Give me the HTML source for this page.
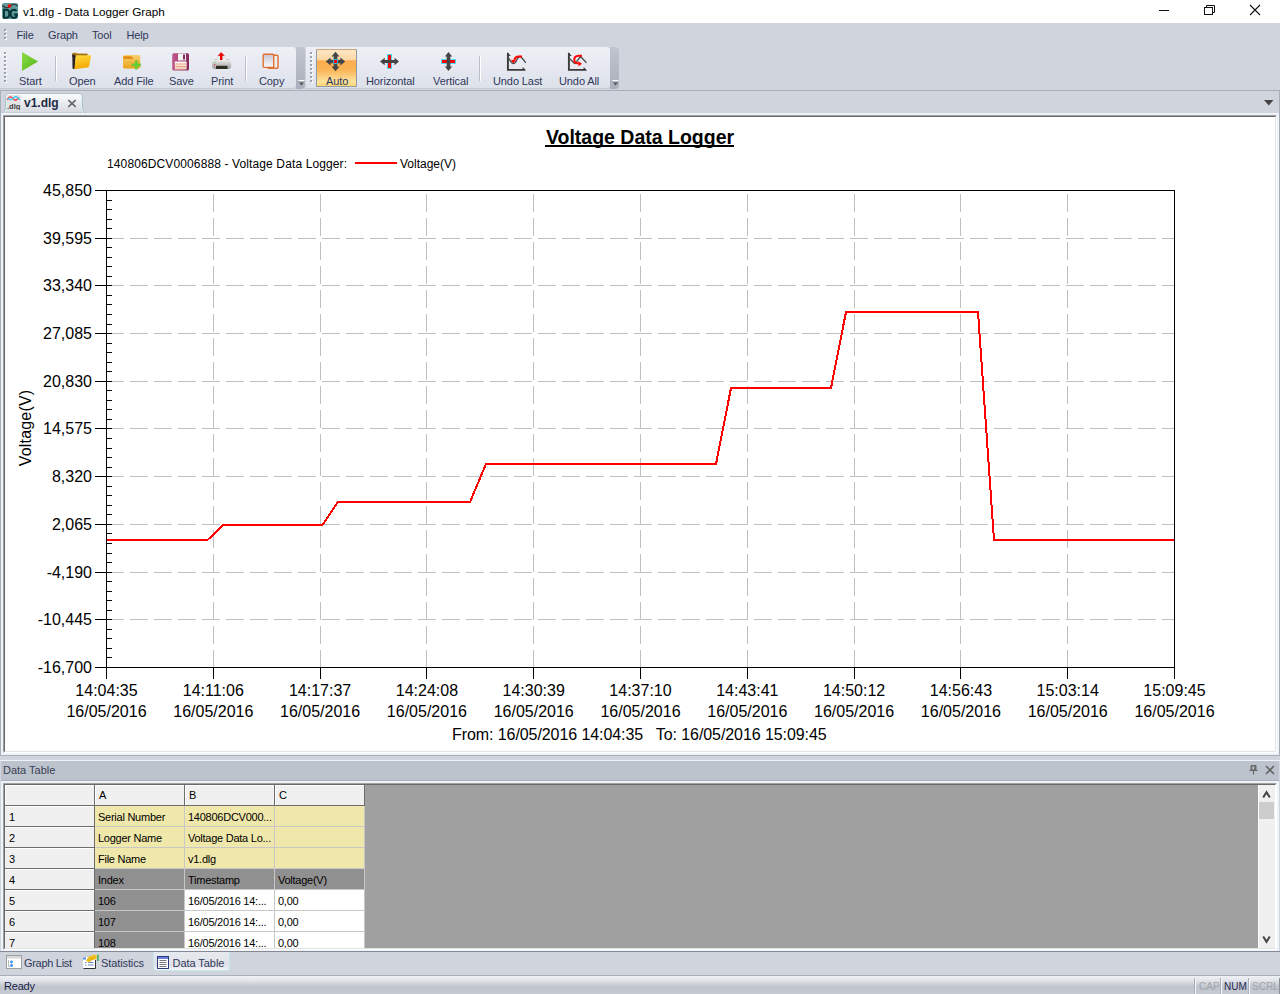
<!DOCTYPE html>
<html><head><meta charset="utf-8"><style>
*{margin:0;padding:0;box-sizing:border-box}
html,body{width:1280px;height:994px;overflow:hidden;background:#cfd4dd;font-family:"Liberation Sans",sans-serif;position:relative}
.a{position:absolute}
.t{position:absolute;white-space:nowrap;line-height:1}
</style></head><body>
<div class="a" style="left:0px;top:0px;width:1280px;height:23px;background:#fff"></div>
<svg class="a" style="left:2px;top:3px" width="17" height="17" viewBox="0 0 17 17">
<rect x="0" y="0" width="16" height="16" rx="2" fill="#5e9c9c"/>
<path d="M0.3 2.5 Q3 5 5.5 4.7 Q8 4 10.5 1.5 Q12.5 0.5 16 3" stroke="#333" stroke-width="1.1" fill="none"/>
<circle cx="7.4" cy="3" r="1.8" fill="#f00"/>
<g transform="translate(0,-0.8)"><path d="M2 7.6 H4.3 Q7.3 7.6 7.3 11.6 Q7.3 15.6 4.3 15.6 H2 Z" stroke="#073535" stroke-width="2" fill="none"/>
<path d="M14.6 8.6 Q13.6 7.5 11.8 7.5 Q8.6 7.5 8.6 11.6 Q8.6 15.7 11.8 15.7 Q14.8 15.7 14.8 12.4 H11.8" stroke="#073535" stroke-width="2" fill="none"/></g>
</svg>
<div class="t" style="left:23px;top:5.5px;font-size:11.7px;color:#000;font-weight:400;">v1.dlg - Data Logger Graph</div>
<div class="a" style="left:1159px;top:10px;width:10px;height:1px;background:#111"></div>
<svg class="a" style="left:1200px;top:0px" width="20" height="20" viewBox="0 0 20 20">
<rect x="4.5" y="7.5" width="8" height="7" fill="none" stroke="#111" stroke-width="1"/>
<path d="M6.5 7.5 V5.5 H14.5 V12.5 H12.5" fill="none" stroke="#111" stroke-width="1"/>
</svg>
<svg class="a" style="left:1245px;top:0px" width="20" height="20" viewBox="0 0 20 20">
<path d="M5 5 L15 15 M15 5 L5 15" stroke="#111" stroke-width="1.1"/>
</svg>
<div class="a" style="left:0px;top:23px;width:1280px;height:67px;background:#cfd4dd"></div>
<div class="a" style="left:4px;top:29px;width:2px;height:2px;background:#9aa1ad;box-shadow:1px 1px 0 #fff"></div>
<div class="a" style="left:4px;top:33px;width:2px;height:2px;background:#9aa1ad;box-shadow:1px 1px 0 #fff"></div>
<div class="a" style="left:4px;top:37px;width:2px;height:2px;background:#9aa1ad;box-shadow:1px 1px 0 #fff"></div>
<div class="t" style="left:16.5px;top:30px;font-size:11px;color:#30385a;font-weight:400;letter-spacing:-0.15px">File</div>
<div class="t" style="left:48px;top:30px;font-size:11px;color:#30385a;font-weight:400;letter-spacing:-0.15px">Graph</div>
<div class="t" style="left:92px;top:30px;font-size:11px;color:#30385a;font-weight:400;letter-spacing:-0.15px">Tool</div>
<div class="t" style="left:126.5px;top:30px;font-size:11px;color:#30385a;font-weight:400;letter-spacing:-0.15px">Help</div>
<div class="a" style="left:0px;top:47px;width:296px;height:42px;background:linear-gradient(#eef0f6,#dde1ea);border-radius:0 4px 4px 0;border-bottom:1px solid #c5cad3"></div>
<div class="a" style="left:4px;top:52px;width:2px;height:2px;background:#9aa1ad;box-shadow:1px 1px 0 #fff"></div>
<div class="a" style="left:4px;top:56px;width:2px;height:2px;background:#9aa1ad;box-shadow:1px 1px 0 #fff"></div>
<div class="a" style="left:4px;top:60px;width:2px;height:2px;background:#9aa1ad;box-shadow:1px 1px 0 #fff"></div>
<div class="a" style="left:4px;top:64px;width:2px;height:2px;background:#9aa1ad;box-shadow:1px 1px 0 #fff"></div>
<div class="a" style="left:4px;top:68px;width:2px;height:2px;background:#9aa1ad;box-shadow:1px 1px 0 #fff"></div>
<div class="a" style="left:4px;top:72px;width:2px;height:2px;background:#9aa1ad;box-shadow:1px 1px 0 #fff"></div>
<div class="a" style="left:4px;top:76px;width:2px;height:2px;background:#9aa1ad;box-shadow:1px 1px 0 #fff"></div>
<div class="a" style="left:4px;top:80px;width:2px;height:2px;background:#9aa1ad;box-shadow:1px 1px 0 #fff"></div>
<div class="a" style="left:296px;top:47px;width:9px;height:42px;background:linear-gradient(#bfc4ce,#aab0bb);border-radius:0 4px 4px 0"></div>
<svg class="a" style="left:298px;top:79px" width="7" height="8" viewBox="0 0 7 8"><path d="M0.5 1.5H6.5" stroke="#fff"/><path d="M1 3.5L3.5 6.5L6 3.5Z" fill="#555"/></svg>
<div class="a" style="left:306px;top:47px;width:304px;height:42px;background:linear-gradient(#eef0f6,#dde1ea);border-radius:0 4px 4px 0;border-bottom:1px solid #c5cad3"></div>
<div class="a" style="left:310px;top:52px;width:2px;height:2px;background:#9aa1ad;box-shadow:1px 1px 0 #fff"></div>
<div class="a" style="left:310px;top:56px;width:2px;height:2px;background:#9aa1ad;box-shadow:1px 1px 0 #fff"></div>
<div class="a" style="left:310px;top:60px;width:2px;height:2px;background:#9aa1ad;box-shadow:1px 1px 0 #fff"></div>
<div class="a" style="left:310px;top:64px;width:2px;height:2px;background:#9aa1ad;box-shadow:1px 1px 0 #fff"></div>
<div class="a" style="left:310px;top:68px;width:2px;height:2px;background:#9aa1ad;box-shadow:1px 1px 0 #fff"></div>
<div class="a" style="left:310px;top:72px;width:2px;height:2px;background:#9aa1ad;box-shadow:1px 1px 0 #fff"></div>
<div class="a" style="left:310px;top:76px;width:2px;height:2px;background:#9aa1ad;box-shadow:1px 1px 0 #fff"></div>
<div class="a" style="left:310px;top:80px;width:2px;height:2px;background:#9aa1ad;box-shadow:1px 1px 0 #fff"></div>
<div class="a" style="left:610px;top:47px;width:9px;height:42px;background:linear-gradient(#bfc4ce,#aab0bb);border-radius:0 4px 4px 0"></div>
<svg class="a" style="left:612px;top:79px" width="7" height="8" viewBox="0 0 7 8"><path d="M0.5 1.5H6.5" stroke="#fff"/><path d="M1 3.5L3.5 6.5L6 3.5Z" fill="#555"/></svg>
<div class="a" style="left:55px;top:56px;width:1px;height:25px;background:#b9bec8;box-shadow:1px 0 0 #fff"></div>
<div class="a" style="left:245px;top:56px;width:1px;height:25px;background:#b9bec8;box-shadow:1px 0 0 #fff"></div>
<div class="a" style="left:479px;top:56px;width:1px;height:25px;background:#b9bec8;box-shadow:1px 0 0 #fff"></div>
<div class="a" style="left:316px;top:49px;width:41px;height:38px;background:linear-gradient(#fde5c4 0%,#fcd8a6 27%,#fbad4e 30%,#fbb457 55%,#fde39e 88%,#fdd670 100%);border:1px solid #8f9aa6;border-top-color:#c9a47a;border-radius:1px"></div>
<div class="t" style="left:19px;top:76px;font-size:11px;color:#30385a;font-weight:400;letter-spacing:-0.1px">Start</div>
<div class="t" style="left:69px;top:76px;font-size:11px;color:#30385a;font-weight:400;letter-spacing:-0.1px">Open</div>
<div class="t" style="left:114px;top:76px;font-size:11px;color:#30385a;font-weight:400;letter-spacing:-0.1px">Add File</div>
<div class="t" style="left:169px;top:76px;font-size:11px;color:#30385a;font-weight:400;letter-spacing:-0.1px">Save</div>
<div class="t" style="left:211px;top:76px;font-size:11px;color:#30385a;font-weight:400;letter-spacing:-0.1px">Print</div>
<div class="t" style="left:259px;top:76px;font-size:11px;color:#30385a;font-weight:400;letter-spacing:-0.1px">Copy</div>
<div class="t" style="left:326px;top:76px;font-size:11px;color:#30385a;font-weight:400;letter-spacing:-0.1px">Auto</div>
<div class="t" style="left:366px;top:76px;font-size:11px;color:#30385a;font-weight:400;letter-spacing:-0.1px">Horizontal</div>
<div class="t" style="left:433px;top:76px;font-size:11px;color:#30385a;font-weight:400;letter-spacing:-0.1px">Vertical</div>
<div class="t" style="left:493px;top:76px;font-size:11px;color:#30385a;font-weight:400;letter-spacing:-0.1px">Undo Last</div>
<div class="t" style="left:559px;top:76px;font-size:11px;color:#30385a;font-weight:400;letter-spacing:-0.1px">Undo All</div>
<svg class="a" style="left:20px;top:51px" width="20" height="21" viewBox="0 0 20 21">
<defs><linearGradient id="gp" x1="0" y1="0" x2="1" y2="1"><stop offset="0" stop-color="#8fdc4a"/><stop offset="1" stop-color="#4fb511"/></linearGradient></defs>
<path d="M2 1 L18 10.5 L2 20 Z" fill="url(#gp)"/></svg>
<svg class="a" style="left:72px;top:52px" width="20" height="18" viewBox="0 0 20 18">
<defs><linearGradient id="gof" x1="0" y1="0" x2="0.3" y2="1"><stop offset="0" stop-color="#ffdc40"/><stop offset="1" stop-color="#f5aa00"/></linearGradient>
<linearGradient id="gob" x1="0" y1="0" x2="0" y2="1"><stop offset="0" stop-color="#c08a20"/><stop offset="1" stop-color="#6a4a10"/></linearGradient></defs>
<path d="M0.3 1.8 Q0.3 0.8 1.3 0.8 H4.5 L5.5 1.6 H15.5 V5 H0.3 Z" fill="url(#gob)"/>
<path d="M0.3 2 L0.5 16.5 L2.8 17.3 L3.8 4 Z" fill="#2a2520"/>
<path d="M3.8 3.2 H19.2 L16.8 15.3 L2.4 17.2 Z" fill="url(#gof)"/></svg>
<svg class="a" style="left:123px;top:54px" width="19" height="17" viewBox="0 0 19 17">
<defs><linearGradient id="gaf" x1="0" y1="0" x2="0" y2="1"><stop offset="0" stop-color="#f9d070"/><stop offset="1" stop-color="#eaa21a"/></linearGradient></defs>
<path d="M0 2.5 Q0 1 1.5 1 H15.5 Q17.2 1 17.2 2.5 V12.8 Q17.2 14.4 15.5 14.4 H1.5 Q0 14.4 0 12.8 Z" fill="url(#gaf)"/>
<path d="M0.3 2.2 H8.5 L10.5 5 H0.3 Z" fill="#e28e12"/>
<path d="M13.3 6.3 V15.4 M8.7 10.9 H17.9" stroke="#66cc33" stroke-width="2.6"/></svg>
<svg class="a" style="left:172px;top:52.5px" width="18" height="18" viewBox="0 0 18 18">
<defs><linearGradient id="gsv" x1="0" y1="0" x2="1" y2="0"><stop offset="0" stop-color="#c4588e"/><stop offset="1" stop-color="#85285a"/></linearGradient>
<linearGradient id="gsl" x1="0" y1="0" x2="0" y2="1"><stop offset="0" stop-color="#fff"/><stop offset="1" stop-color="#f3c8b0"/></linearGradient></defs>
<rect x="0.2" y="0.2" width="16.8" height="17.2" rx="1.5" fill="url(#gsv)"/>
<rect x="6" y="0.5" width="8" height="7" fill="#f4f4f4"/>
<rect x="11" y="1.5" width="2" height="5" fill="#8a2a5a"/>
<rect x="2.8" y="8.5" width="11.8" height="8" fill="url(#gsl)"/>
<path d="M3.5 11H14M3.5 13.5H14" stroke="#e8a080" stroke-width="1"/></svg>
<svg class="a" style="left:212px;top:52px" width="20" height="18" viewBox="0 0 20 18">
<defs><linearGradient id="gpr" x1="0" y1="0" x2="0" y2="1"><stop offset="0" stop-color="#f2f2f2"/><stop offset="1" stop-color="#9a9a9a"/></linearGradient></defs>
<path d="M5 3.5 H14 L15 8 H4 Z" fill="#e8e8e8"/>
<path d="M2 8 L3 7 H5 L5.5 8 M14 8 L14.5 7 H16.5 L17.5 8" fill="#333"/>
<rect x="0" y="7.3" width="19.2" height="9.8" rx="3" fill="url(#gpr)"/>
<rect x="4" y="13.8" width="11.5" height="3.2" fill="#2d2d22"/>
<rect x="2" y="10.3" width="1.2" height="1" fill="#5c5"/><rect x="2" y="12" width="1.2" height="1.4" fill="#e33"/>
<path d="M9.2 0.2 L12.8 3.8 H10.4 V8 H8 V3.8 H5.6 Z" fill="#e80000"/></svg>
<svg class="a" style="left:262px;top:53px" width="18" height="17" viewBox="0 0 18 17">
<defs><linearGradient id="gcp" x1="0" y1="0" x2="0" y2="1"><stop offset="0" stop-color="#c6c6d6"/><stop offset="1" stop-color="#fafafa"/></linearGradient></defs>
<rect x="5.5" y="2.3" width="10.5" height="13" rx="1" fill="#eee" stroke="#e07030" stroke-width="1.4"/>
<rect x="1.2" y="1.2" width="10.5" height="13.2" rx="1" fill="url(#gcp)" stroke="#e07030" stroke-width="1.4"/></svg>
<svg class="a" style="left:320px;top:48px" width="140" height="27" viewBox="320 48 140 27">
<path d="M335.5 51.8 L339.5 56.6 H337.3 V59.7 H340.4 V57.5 L345.2 61.5 L340.4 65.5 V63.3 H337.3 V66.4 H339.5 L335.5 71.2 L331.5 66.4 H333.7 V63.3 H330.6 V65.5 L325.8 61.5 L330.6 57.5 V59.7 H333.7 V56.6 H331.5 Z" fill="#454545"/>
<rect x="333.5" y="59.5" width="4" height="4" fill="#f00" stroke="#33b4dc" stroke-width="1"/>
<rect x="387.5" y="54.5" width="4" height="14" fill="#f00" stroke="#4fd8f0" stroke-width="1"/>
<path d="M380 61.5 L384.7 57.8 V59.9 H394.5 V57.8 L399 61.5 L394.5 65.2 V63.1 H384.7 V65.2 Z" fill="#454545"/>
<rect x="441.5" y="59.5" width="14" height="4" fill="#f00" stroke="#4fd8f0" stroke-width="1"/>
<path d="M448.5 52 L452.2 56.6 H450.3 V66.4 H452.2 L448.5 71 L444.8 66.4 H446.7 V56.6 H444.8 Z" fill="#454545"/>
</svg>
<svg class="a" style="left:500px;top:48px" width="92" height="26" viewBox="500 48 92 26">
<g id="ax"><path d="M507.9 53 V69.9 H525" stroke="#3a3a3a" stroke-width="1.9" fill="none"/>
<path d="M507 52 L510.8 56 H508.5 Z" fill="#3a3a3a"/><path d="M526.4 70.8 L522.6 67 V69.5 Z" fill="#3a3a3a"/></g>
<path d="M508.5 57.8 Q511.5 63.8 513.5 63.6 Q515.5 63.3 517 59.5 Q518.5 56.3 520.2 56.6 Q521.5 57 525.8 62.8" stroke="#4a4a4a" stroke-width="1.3" fill="none"/>
<path d="M522 56.4 H518.5 Q515.5 56.5 514.3 59.8" stroke="#f00" stroke-width="2" fill="none"/>
<path d="M510.8 59.8 L516 60.3 L513.2 63.3 Z" fill="#f00"/>
<use href="#ax" x="61"/>
<path d="M569.5 58.5 L574.5 63.5 Q575.5 64 577 61 L580.5 56.5 L586.5 62.8" stroke="#4a4a4a" stroke-width="1.3" fill="none"/>
<path d="M582 55.8 H578.5 Q574.5 56 574.2 59.8 Q574.3 63.3 578.5 63.6" stroke="#f00" stroke-width="2" fill="none"/>
<path d="M578.2 61.2 L582 63.8 L578.6 66.2 Z" fill="#f00"/>
</svg>
<div class="a" style="left:0px;top:90px;width:1280px;height:1px;background:#a9afb9"></div>
<div class="a" style="left:0px;top:90px;width:1px;height:670px;background:#a9afb9"></div>
<div class="a" style="left:1279px;top:90px;width:1px;height:670px;background:#a9afb9"></div>
<svg class="a" style="left:0px;top:90px" width="90" height="24" viewBox="0 90 90 24">
<defs><linearGradient id="gtab" x1="0" y1="0" x2="0" y2="1"><stop offset="0" stop-color="#fbfcfd"/><stop offset="0.5" stop-color="#e9ebef"/><stop offset="0.9" stop-color="#d9dce3"/><stop offset="1" stop-color="#dfe0da"/></linearGradient></defs>
<path d="M2 113 Q5.5 112.5 5.5 108 V96.5 Q5.5 93.5 8.5 93.5 H79 Q82.5 93.5 82.5 96.5 V108 Q82.5 112.5 86 113 Z" fill="url(#gtab)" stroke="#b9bec6" stroke-width="1"/>
<path d="M4 112.5 Q6.5 111.5 6.5 108 V97" stroke="#c8f4f8" stroke-width="1" fill="none"/>
<path d="M84 112.5 Q81.5 111.5 81.5 108 V97" stroke="#c8f4f8" stroke-width="1" fill="none"/>
</svg>
<svg class="a" style="left:7px;top:95px" width="14" height="15" viewBox="0 0 14 15">
<rect x="0" y="0" width="14" height="15" fill="#e4e4e4"/>
<path d="M0.5 5 Q2 1 4 2 Q6 3 7 4.5 Q8.5 6 10.5 4 L12 2.5" stroke="#f33" stroke-width="1.3" fill="none"/>
<path d="M1 3 Q3.5 6 6 3.5 Q8.5 0.5 10.5 2.5 Q12 4 13 5" stroke="#3cf" stroke-width="1.3" fill="none"/>
<text x="0" y="14" font-family="Liberation Sans" font-size="7.5" font-weight="700" fill="#3a3a3a">.dlg</text></svg>
<div class="t" style="left:24px;top:97px;font-size:12px;color:#1e2a44;font-weight:700;">v1.dlg</div>
<svg class="a" style="left:67px;top:99px" width="10" height="9" viewBox="0 0 10 9"><path d="M1.3 1.2 L8.7 7.8 M8.7 1.2 L1.3 7.8" stroke="#666" stroke-width="1.6"/></svg>
<svg class="a" style="left:1264px;top:100px" width="10" height="6" viewBox="0 0 10 6"><path d="M0 0 H9.5 L4.75 5.5Z" fill="#444"/></svg>
<div class="a" style="left:1px;top:113px;width:1278px;height:643px;background:#eef2fa"></div>
<div class="a" style="left:3px;top:115px;width:1274px;height:638px;background:#fff;border-top:1px solid #a0a0a0;border-left:1px solid #a0a0a0;border-right:1px solid #fff;border-bottom:1px solid #fff"></div>
<div class="a" style="left:4px;top:116px;width:1272px;height:636px;background:#fff;border-top:1px solid #696969;border-left:1px solid #696969;border-right:1px solid #e3e3e3;border-bottom:1px solid #e3e3e3"></div>
<div class="a" style="left:0px;top:755px;width:1280px;height:1px;background:#a9afb9"></div>
<svg class="a" style="left:0;top:0" width="1280" height="994" viewBox="0 0 1280 994">
<line x1="106" y1="238.5" x2="1174" y2="238.5" stroke="#c0c0c0" stroke-width="1" stroke-dasharray="18 6"/>
<line x1="106" y1="285.5" x2="1174" y2="285.5" stroke="#c0c0c0" stroke-width="1" stroke-dasharray="18 6"/>
<line x1="106" y1="333.5" x2="1174" y2="333.5" stroke="#c0c0c0" stroke-width="1" stroke-dasharray="18 6"/>
<line x1="106" y1="381.5" x2="1174" y2="381.5" stroke="#c0c0c0" stroke-width="1" stroke-dasharray="18 6"/>
<line x1="106" y1="428.5" x2="1174" y2="428.5" stroke="#c0c0c0" stroke-width="1" stroke-dasharray="18 6"/>
<line x1="106" y1="476.5" x2="1174" y2="476.5" stroke="#c0c0c0" stroke-width="1" stroke-dasharray="18 6"/>
<line x1="106" y1="524.5" x2="1174" y2="524.5" stroke="#c0c0c0" stroke-width="1" stroke-dasharray="18 6"/>
<line x1="106" y1="572.5" x2="1174" y2="572.5" stroke="#c0c0c0" stroke-width="1" stroke-dasharray="18 6"/>
<line x1="106" y1="619.5" x2="1174" y2="619.5" stroke="#c0c0c0" stroke-width="1" stroke-dasharray="18 6"/>
<line x1="213.5" y1="668" x2="213.5" y2="190" stroke="#c0c0c0" stroke-width="1" stroke-dasharray="18 6"/>
<line x1="320.5" y1="668" x2="320.5" y2="190" stroke="#c0c0c0" stroke-width="1" stroke-dasharray="18 6"/>
<line x1="426.5" y1="668" x2="426.5" y2="190" stroke="#c0c0c0" stroke-width="1" stroke-dasharray="18 6"/>
<line x1="533.5" y1="668" x2="533.5" y2="190" stroke="#c0c0c0" stroke-width="1" stroke-dasharray="18 6"/>
<line x1="640.5" y1="668" x2="640.5" y2="190" stroke="#c0c0c0" stroke-width="1" stroke-dasharray="18 6"/>
<line x1="747.5" y1="668" x2="747.5" y2="190" stroke="#c0c0c0" stroke-width="1" stroke-dasharray="18 6"/>
<line x1="854.5" y1="668" x2="854.5" y2="190" stroke="#c0c0c0" stroke-width="1" stroke-dasharray="18 6"/>
<line x1="960.5" y1="668" x2="960.5" y2="190" stroke="#c0c0c0" stroke-width="1" stroke-dasharray="18 6"/>
<line x1="1067.5" y1="668" x2="1067.5" y2="190" stroke="#c0c0c0" stroke-width="1" stroke-dasharray="18 6"/>
<rect x="106.5" y="190.5" width="1068" height="477" fill="none" stroke="#000" stroke-width="1"/>
<line x1="95" y1="190.5" x2="112" y2="190.5" stroke="#000"/>
<line x1="107" y1="200.5" x2="112" y2="200.5" stroke="#000"/>
<line x1="107" y1="209.5" x2="112" y2="209.5" stroke="#000"/>
<line x1="107" y1="219.5" x2="112" y2="219.5" stroke="#000"/>
<line x1="107" y1="228.5" x2="112" y2="228.5" stroke="#000"/>
<line x1="95" y1="238.5" x2="112" y2="238.5" stroke="#000"/>
<line x1="107" y1="247.5" x2="112" y2="247.5" stroke="#000"/>
<line x1="107" y1="257.5" x2="112" y2="257.5" stroke="#000"/>
<line x1="107" y1="266.5" x2="112" y2="266.5" stroke="#000"/>
<line x1="107" y1="276.5" x2="112" y2="276.5" stroke="#000"/>
<line x1="95" y1="285.5" x2="112" y2="285.5" stroke="#000"/>
<line x1="107" y1="295.5" x2="112" y2="295.5" stroke="#000"/>
<line x1="107" y1="304.5" x2="112" y2="304.5" stroke="#000"/>
<line x1="107" y1="314.5" x2="112" y2="314.5" stroke="#000"/>
<line x1="107" y1="324.5" x2="112" y2="324.5" stroke="#000"/>
<line x1="95" y1="333.5" x2="112" y2="333.5" stroke="#000"/>
<line x1="107" y1="343.5" x2="112" y2="343.5" stroke="#000"/>
<line x1="107" y1="352.5" x2="112" y2="352.5" stroke="#000"/>
<line x1="107" y1="362.5" x2="112" y2="362.5" stroke="#000"/>
<line x1="107" y1="371.5" x2="112" y2="371.5" stroke="#000"/>
<line x1="95" y1="381.5" x2="112" y2="381.5" stroke="#000"/>
<line x1="107" y1="390.5" x2="112" y2="390.5" stroke="#000"/>
<line x1="107" y1="400.5" x2="112" y2="400.5" stroke="#000"/>
<line x1="107" y1="409.5" x2="112" y2="409.5" stroke="#000"/>
<line x1="107" y1="419.5" x2="112" y2="419.5" stroke="#000"/>
<line x1="95" y1="428.5" x2="112" y2="428.5" stroke="#000"/>
<line x1="107" y1="438.5" x2="112" y2="438.5" stroke="#000"/>
<line x1="107" y1="448.5" x2="112" y2="448.5" stroke="#000"/>
<line x1="107" y1="457.5" x2="112" y2="457.5" stroke="#000"/>
<line x1="107" y1="467.5" x2="112" y2="467.5" stroke="#000"/>
<line x1="95" y1="476.5" x2="112" y2="476.5" stroke="#000"/>
<line x1="107" y1="486.5" x2="112" y2="486.5" stroke="#000"/>
<line x1="107" y1="495.5" x2="112" y2="495.5" stroke="#000"/>
<line x1="107" y1="505.5" x2="112" y2="505.5" stroke="#000"/>
<line x1="107" y1="514.5" x2="112" y2="514.5" stroke="#000"/>
<line x1="95" y1="524.5" x2="112" y2="524.5" stroke="#000"/>
<line x1="107" y1="533.5" x2="112" y2="533.5" stroke="#000"/>
<line x1="107" y1="543.5" x2="112" y2="543.5" stroke="#000"/>
<line x1="107" y1="553.5" x2="112" y2="553.5" stroke="#000"/>
<line x1="107" y1="562.5" x2="112" y2="562.5" stroke="#000"/>
<line x1="95" y1="572.5" x2="112" y2="572.5" stroke="#000"/>
<line x1="107" y1="581.5" x2="112" y2="581.5" stroke="#000"/>
<line x1="107" y1="591.5" x2="112" y2="591.5" stroke="#000"/>
<line x1="107" y1="600.5" x2="112" y2="600.5" stroke="#000"/>
<line x1="107" y1="610.5" x2="112" y2="610.5" stroke="#000"/>
<line x1="95" y1="619.5" x2="112" y2="619.5" stroke="#000"/>
<line x1="107" y1="629.5" x2="112" y2="629.5" stroke="#000"/>
<line x1="107" y1="638.5" x2="112" y2="638.5" stroke="#000"/>
<line x1="107" y1="648.5" x2="112" y2="648.5" stroke="#000"/>
<line x1="107" y1="657.5" x2="112" y2="657.5" stroke="#000"/>
<line x1="95" y1="667.5" x2="112" y2="667.5" stroke="#000"/>
<line x1="106.5" y1="667" x2="106.5" y2="679" stroke="#000"/>
<line x1="213.5" y1="667" x2="213.5" y2="679" stroke="#000"/>
<line x1="320.5" y1="667" x2="320.5" y2="679" stroke="#000"/>
<line x1="426.5" y1="667" x2="426.5" y2="679" stroke="#000"/>
<line x1="533.5" y1="667" x2="533.5" y2="679" stroke="#000"/>
<line x1="640.5" y1="667" x2="640.5" y2="679" stroke="#000"/>
<line x1="747.5" y1="667" x2="747.5" y2="679" stroke="#000"/>
<line x1="854.5" y1="667" x2="854.5" y2="679" stroke="#000"/>
<line x1="960.5" y1="667" x2="960.5" y2="679" stroke="#000"/>
<line x1="1067.5" y1="667" x2="1067.5" y2="679" stroke="#000"/>
<line x1="1174.5" y1="667" x2="1174.5" y2="679" stroke="#000"/>
<polyline fill="none" stroke="#f00" stroke-width="2" stroke-linejoin="miter" shape-rendering="crispEdges" points="107,540 207.5,540 215,533 223,525 322.5,525 338,502 470,502 486,464 716,464 731,388 831,388 846,312 978,312 994,540 1174,540"/>
<line x1="355" y1="163" x2="397" y2="163" stroke="#f00" stroke-width="2"/>
</svg>
<div class="t" style="left:640px;top:128px;font-size:19.5px;color:#000;font-weight:700;transform:translateX(-50%)">Voltage Data Logger</div>
<div class="a" style="left:545px;top:145px;width:189px;height:2px;background:#000"></div>
<div class="t" style="left:107px;top:158px;font-size:12px;color:#000;font-weight:400;letter-spacing:0.12px">140806DCV0006888 - Voltage Data Logger:</div>
<div class="t" style="left:400px;top:158px;font-size:12px;color:#000;font-weight:400;">Voltage(V)</div>
<div class="t" style="right:1188px;top:183px;font-size:16px;color:#000">45,850</div>
<div class="t" style="right:1188px;top:231px;font-size:16px;color:#000">39,595</div>
<div class="t" style="right:1188px;top:278px;font-size:16px;color:#000">33,340</div>
<div class="t" style="right:1188px;top:326px;font-size:16px;color:#000">27,085</div>
<div class="t" style="right:1188px;top:374px;font-size:16px;color:#000">20,830</div>
<div class="t" style="right:1188px;top:421px;font-size:16px;color:#000">14,575</div>
<div class="t" style="right:1188px;top:469px;font-size:16px;color:#000">8,320</div>
<div class="t" style="right:1188px;top:517px;font-size:16px;color:#000">2,065</div>
<div class="t" style="right:1188px;top:565px;font-size:16px;color:#000">-4,190</div>
<div class="t" style="right:1188px;top:612px;font-size:16px;color:#000">-10,445</div>
<div class="t" style="right:1188px;top:660px;font-size:16px;color:#000">-16,700</div>
<div class="t" style="left:106.5px;top:680px;font-size:16px;color:#000;transform:translateX(-50%);text-align:center;line-height:21px">14:04:35<br>16/05/2016</div>
<div class="t" style="left:213.3px;top:680px;font-size:16px;color:#000;transform:translateX(-50%);text-align:center;line-height:21px">14:11:06<br>16/05/2016</div>
<div class="t" style="left:320.1px;top:680px;font-size:16px;color:#000;transform:translateX(-50%);text-align:center;line-height:21px">14:17:37<br>16/05/2016</div>
<div class="t" style="left:426.9px;top:680px;font-size:16px;color:#000;transform:translateX(-50%);text-align:center;line-height:21px">14:24:08<br>16/05/2016</div>
<div class="t" style="left:533.7px;top:680px;font-size:16px;color:#000;transform:translateX(-50%);text-align:center;line-height:21px">14:30:39<br>16/05/2016</div>
<div class="t" style="left:640.5px;top:680px;font-size:16px;color:#000;transform:translateX(-50%);text-align:center;line-height:21px">14:37:10<br>16/05/2016</div>
<div class="t" style="left:747.3px;top:680px;font-size:16px;color:#000;transform:translateX(-50%);text-align:center;line-height:21px">14:43:41<br>16/05/2016</div>
<div class="t" style="left:854.1px;top:680px;font-size:16px;color:#000;transform:translateX(-50%);text-align:center;line-height:21px">14:50:12<br>16/05/2016</div>
<div class="t" style="left:960.9px;top:680px;font-size:16px;color:#000;transform:translateX(-50%);text-align:center;line-height:21px">14:56:43<br>16/05/2016</div>
<div class="t" style="left:1067.6999999999998px;top:680px;font-size:16px;color:#000;transform:translateX(-50%);text-align:center;line-height:21px">15:03:14<br>16/05/2016</div>
<div class="t" style="left:1174.5px;top:680px;font-size:16px;color:#000;transform:translateX(-50%);text-align:center;line-height:21px">15:09:45<br>16/05/2016</div>
<div class="t" style="left:452px;top:727px;font-size:16px;color:#000;font-weight:400;letter-spacing:-0.08px">From: 16/05/2016 14:04:35&nbsp;&nbsp; To: 16/05/2016 15:09:45</div>
<div class="t" style="left:25.5px;top:428px;font-size:16px;letter-spacing:0.2px;color:#000;transform:translate(-50%,-50%) rotate(-90deg)">Voltage(V)</div>
<div class="a" style="left:0px;top:756px;width:1280px;height:4px;background:#d0d5dd"></div>
<div class="a" style="left:0px;top:760px;width:1280px;height:1px;background:#eef2fa"></div>
<div class="a" style="left:1px;top:761px;width:1278px;height:20px;background:#bcc3cd"></div>
<div class="a" style="left:1px;top:780px;width:1278px;height:1px;background:#abb1bc"></div>
<div class="t" style="left:3px;top:765px;font-size:11px;color:#3a3f55;font-weight:400;">Data Table</div>
<svg class="a" style="left:1249px;top:765px" width="9" height="10" viewBox="0 0 9 10"><path d="M2 0.5 H7 V5 H2 Z" fill="#777" stroke="#666"/><path d="M3.5 1.5 H5 V4.5 H3.5Z" fill="#bcc3cd"/><path d="M0.5 5.5 H8.5 M4.5 5.5 V9.5" stroke="#666" fill="none" stroke-width="1.2"/></svg>
<svg class="a" style="left:1265px;top:765px" width="10" height="10" viewBox="0 0 10 10"><path d="M1 1 L9 9 M9 1 L1 9" stroke="#666" stroke-width="1.6"/></svg>
<div class="a" style="left:1px;top:781px;width:1278px;height:170px;background:#eef2fa"></div>
<div class="a" style="left:3px;top:783px;width:1274px;height:167px;background:#fff;border-top:1px solid #a0a0a0;border-left:1px solid #a0a0a0;border-bottom:1px solid #fff;border-right:1px solid #fff"></div>
<div class="a" style="left:4px;top:784px;width:1272px;height:165px;background:#a0a0a0;border-top:1px solid #696969;border-left:1px solid #696969;border-bottom:1px solid #e3e3e3;border-right:1px solid #fff"></div>
<div class="a" style="left:0px;top:951px;width:1280px;height:1px;background:#858a93"></div>
<div class="a" style="left:0;top:0;width:1280px;height:948px;overflow:hidden"><div class="a" style="left:5px;top:785px;width:90px;height:21px;background:#f0f0f0;border-right:1px solid #6d6d6d;border-bottom:1px solid #6d6d6d;box-shadow:inset 1px 1px 0 #fff"></div>
<div class="a" style="left:95px;top:785px;width:90px;height:21px;background:#f0f0f0;border-right:1px solid #6d6d6d;border-bottom:1px solid #6d6d6d;box-shadow:inset 1px 1px 0 #fff"></div>
<div class="a" style="left:185px;top:785px;width:90px;height:21px;background:#f0f0f0;border-right:1px solid #6d6d6d;border-bottom:1px solid #6d6d6d;box-shadow:inset 1px 1px 0 #fff"></div>
<div class="a" style="left:275px;top:785px;width:90px;height:21px;background:#f0f0f0;border-right:1px solid #6d6d6d;border-bottom:1px solid #6d6d6d;box-shadow:inset 1px 1px 0 #fff"></div>
<div class="t" style="left:99px;top:790px;font-size:11px;color:#000">A</div>
<div class="t" style="left:189px;top:790px;font-size:11px;color:#000">B</div>
<div class="t" style="left:279px;top:790px;font-size:11px;color:#000">C</div>
<div class="a" style="left:5px;top:806px;width:90px;height:21px;background:#f0f0f0;border-right:1px solid #6d6d6d;border-bottom:1px solid #6d6d6d;box-shadow:inset 0 1px 0 #fff"></div>
<div class="a" style="left:95px;top:806px;width:90px;height:21px;background:#f0e8aa;border-right:1px solid #c8c8c8;border-bottom:1px solid #c8c8c8"></div>
<div class="a" style="left:185px;top:806px;width:90px;height:21px;background:#f0e8aa;border-right:1px solid #c8c8c8;border-bottom:1px solid #c8c8c8"></div>
<div class="a" style="left:275px;top:806px;width:90px;height:21px;background:#f0e8aa;border-right:1px solid #c8c8c8;border-bottom:1px solid #c8c8c8"></div>
<div class="t" style="left:9px;top:812px;font-size:11px;color:#000;letter-spacing:-0.25px">1</div>
<div class="t" style="left:98px;top:812px;font-size:11px;color:#000;letter-spacing:-0.25px">Serial Number</div>
<div class="t" style="left:188px;top:812px;font-size:11px;color:#000;letter-spacing:-0.25px">140806DCV000...</div>
<div class="a" style="left:5px;top:827px;width:90px;height:21px;background:#f0f0f0;border-right:1px solid #6d6d6d;border-bottom:1px solid #6d6d6d;box-shadow:inset 0 1px 0 #fff"></div>
<div class="a" style="left:95px;top:827px;width:90px;height:21px;background:#f0e8aa;border-right:1px solid #c8c8c8;border-bottom:1px solid #c8c8c8"></div>
<div class="a" style="left:185px;top:827px;width:90px;height:21px;background:#f0e8aa;border-right:1px solid #c8c8c8;border-bottom:1px solid #c8c8c8"></div>
<div class="a" style="left:275px;top:827px;width:90px;height:21px;background:#f0e8aa;border-right:1px solid #c8c8c8;border-bottom:1px solid #c8c8c8"></div>
<div class="t" style="left:9px;top:833px;font-size:11px;color:#000;letter-spacing:-0.25px">2</div>
<div class="t" style="left:98px;top:833px;font-size:11px;color:#000;letter-spacing:-0.25px">Logger Name</div>
<div class="t" style="left:188px;top:833px;font-size:11px;color:#000;letter-spacing:-0.25px">Voltage Data Lo...</div>
<div class="a" style="left:5px;top:848px;width:90px;height:21px;background:#f0f0f0;border-right:1px solid #6d6d6d;border-bottom:1px solid #6d6d6d;box-shadow:inset 0 1px 0 #fff"></div>
<div class="a" style="left:95px;top:848px;width:90px;height:21px;background:#f0e8aa;border-right:1px solid #c8c8c8;border-bottom:1px solid #c8c8c8"></div>
<div class="a" style="left:185px;top:848px;width:90px;height:21px;background:#f0e8aa;border-right:1px solid #c8c8c8;border-bottom:1px solid #c8c8c8"></div>
<div class="a" style="left:275px;top:848px;width:90px;height:21px;background:#f0e8aa;border-right:1px solid #c8c8c8;border-bottom:1px solid #c8c8c8"></div>
<div class="t" style="left:9px;top:854px;font-size:11px;color:#000;letter-spacing:-0.25px">3</div>
<div class="t" style="left:98px;top:854px;font-size:11px;color:#000;letter-spacing:-0.25px">File Name</div>
<div class="t" style="left:188px;top:854px;font-size:11px;color:#000;letter-spacing:-0.25px">v1.dlg</div>
<div class="a" style="left:5px;top:869px;width:90px;height:21px;background:#f0f0f0;border-right:1px solid #6d6d6d;border-bottom:1px solid #6d6d6d;box-shadow:inset 0 1px 0 #fff"></div>
<div class="a" style="left:95px;top:869px;width:90px;height:21px;background:#909090;border-right:1px solid #c8c8c8;border-bottom:1px solid #c8c8c8"></div>
<div class="a" style="left:185px;top:869px;width:90px;height:21px;background:#909090;border-right:1px solid #c8c8c8;border-bottom:1px solid #c8c8c8"></div>
<div class="a" style="left:275px;top:869px;width:90px;height:21px;background:#909090;border-right:1px solid #c8c8c8;border-bottom:1px solid #c8c8c8"></div>
<div class="t" style="left:9px;top:875px;font-size:11px;color:#000;letter-spacing:-0.25px">4</div>
<div class="t" style="left:98px;top:875px;font-size:11px;color:#000;letter-spacing:-0.25px">Index</div>
<div class="t" style="left:188px;top:875px;font-size:11px;color:#000;letter-spacing:-0.25px">Timestamp</div>
<div class="t" style="left:278px;top:875px;font-size:11px;color:#000;letter-spacing:-0.25px">Voltage(V)</div>
<div class="a" style="left:5px;top:890px;width:90px;height:21px;background:#f0f0f0;border-right:1px solid #6d6d6d;border-bottom:1px solid #6d6d6d;box-shadow:inset 0 1px 0 #fff"></div>
<div class="a" style="left:95px;top:890px;width:90px;height:21px;background:#909090;border-right:1px solid #c8c8c8;border-bottom:1px solid #c8c8c8"></div>
<div class="a" style="left:185px;top:890px;width:90px;height:21px;background:#fff;border-right:1px solid #c8c8c8;border-bottom:1px solid #c8c8c8"></div>
<div class="a" style="left:275px;top:890px;width:90px;height:21px;background:#fff;border-right:1px solid #c8c8c8;border-bottom:1px solid #c8c8c8"></div>
<div class="t" style="left:9px;top:896px;font-size:11px;color:#000;letter-spacing:-0.25px">5</div>
<div class="t" style="left:98px;top:896px;font-size:11px;color:#000;letter-spacing:-0.25px">106</div>
<div class="t" style="left:188px;top:896px;font-size:11px;color:#000;letter-spacing:-0.25px">16/05/2016 14:...</div>
<div class="t" style="left:278px;top:896px;font-size:11px;color:#000;letter-spacing:-0.25px">0,00</div>
<div class="a" style="left:5px;top:911px;width:90px;height:21px;background:#f0f0f0;border-right:1px solid #6d6d6d;border-bottom:1px solid #6d6d6d;box-shadow:inset 0 1px 0 #fff"></div>
<div class="a" style="left:95px;top:911px;width:90px;height:21px;background:#909090;border-right:1px solid #c8c8c8;border-bottom:1px solid #c8c8c8"></div>
<div class="a" style="left:185px;top:911px;width:90px;height:21px;background:#fff;border-right:1px solid #c8c8c8;border-bottom:1px solid #c8c8c8"></div>
<div class="a" style="left:275px;top:911px;width:90px;height:21px;background:#fff;border-right:1px solid #c8c8c8;border-bottom:1px solid #c8c8c8"></div>
<div class="t" style="left:9px;top:917px;font-size:11px;color:#000;letter-spacing:-0.25px">6</div>
<div class="t" style="left:98px;top:917px;font-size:11px;color:#000;letter-spacing:-0.25px">107</div>
<div class="t" style="left:188px;top:917px;font-size:11px;color:#000;letter-spacing:-0.25px">16/05/2016 14:...</div>
<div class="t" style="left:278px;top:917px;font-size:11px;color:#000;letter-spacing:-0.25px">0,00</div>
<div class="a" style="left:5px;top:932px;width:90px;height:19px;background:#f0f0f0;border-right:1px solid #6d6d6d;border-bottom:1px solid #6d6d6d;box-shadow:inset 0 1px 0 #fff"></div>
<div class="a" style="left:95px;top:932px;width:90px;height:19px;background:#909090;border-right:1px solid #c8c8c8;border-bottom:1px solid #c8c8c8"></div>
<div class="a" style="left:185px;top:932px;width:90px;height:19px;background:#fff;border-right:1px solid #c8c8c8;border-bottom:1px solid #c8c8c8"></div>
<div class="a" style="left:275px;top:932px;width:90px;height:19px;background:#fff;border-right:1px solid #c8c8c8;border-bottom:1px solid #c8c8c8"></div>
<div class="t" style="left:9px;top:938px;font-size:11px;color:#000;letter-spacing:-0.25px">7</div>
<div class="t" style="left:98px;top:938px;font-size:11px;color:#000;letter-spacing:-0.25px">108</div>
<div class="t" style="left:188px;top:938px;font-size:11px;color:#000;letter-spacing:-0.25px">16/05/2016 14:...</div>
<div class="t" style="left:278px;top:938px;font-size:11px;color:#000;letter-spacing:-0.25px">0,00</div></div>
<div class="a" style="left:1258px;top:785px;width:17px;height:163px;background:#f0f0f0;border-left:1px solid #fff"></div>
<svg class="a" style="left:1262px;top:790px" width="10" height="9" viewBox="0 0 10 9"><path d="M1.2 7.5 L4.5 2.2 L7.8 7.5" stroke="#444" stroke-width="2" fill="none"/></svg>
<svg class="a" style="left:1262px;top:935px" width="10" height="9" viewBox="0 0 10 9"><path d="M1.2 1.5 L4.5 6.8 L7.8 1.5" stroke="#444" stroke-width="2" fill="none"/></svg>
<div class="a" style="left:1259px;top:802px;width:15px;height:17px;background:#cdcdcd"></div>
<div class="a" style="left:0px;top:952px;width:1280px;height:24px;background:#cfd4dd"></div>
<div class="a" style="left:153px;top:952px;width:77px;height:19px;background:linear-gradient(#e6e9ee 0%,#dfe2e8 75%,#f3f5f8 100%);border:1px solid #c5e6ea;border-top:none;border-radius:0 0 4px 4px"></div>
<svg class="a" style="left:6px;top:955px" width="16" height="14" viewBox="0 0 16 14"><rect x="0.5" y="0.5" width="15" height="13" fill="#fff" stroke="#a0a0a0"/><rect x="1" y="1" width="14" height="2.5" fill="#d8d8d8"/><circle cx="5.5" cy="7" r="1.4" fill="#3a8ef0"/><circle cx="5.5" cy="10.5" r="1.4" fill="#3a8ef0"/><path d="M2.5 5V11.5H4" stroke="#bbb" fill="none"/></svg>
<svg class="a" style="left:83px;top:954px" width="17" height="16" viewBox="0 0 17 16"><rect x="0" y="3.5" width="12" height="11" fill="#fff"/><rect x="0" y="3.5" width="3" height="2" fill="#5a8ae0"/><path d="M0.5 14.5H12.5V6" stroke="#333" fill="none"/><path d="M2 8.5H3.5M5 8.5H10.5M2 11H3.5M5 11H10.5" stroke="#6a8ac8"/><path d="M3 6.5 L6.5 2 L11.5 0.8 L14 1.8 L13.2 5 L8.5 6.5 L5.5 8.5 Z" fill="#f2c21a"/><path d="M4 6 L7 3 M6 7 L9 4 M8 6.5 L11 3" stroke="#c8a010" stroke-width="0.7"/><rect x="14.3" y="0.5" width="1.4" height="6.5" fill="#33aa44"/></svg>
<svg class="a" style="left:157px;top:956px" width="12" height="13" viewBox="0 0 12 13"><rect x="0.5" y="0.5" width="11" height="12" fill="#fff" stroke="#2a3a7a"/><rect x="1" y="1" width="10" height="2" fill="#6a7ee0"/><path d="M2.5 4.5H9.5M2.5 6.5H9.5M2.5 8.5H9.5M2.5 10.5H9.5" stroke="#777"/></svg>
<div class="t" style="left:24px;top:958px;font-size:11px;color:#30385a;font-weight:400;letter-spacing:-0.3px">Graph List</div>
<div class="t" style="left:101px;top:958px;font-size:11px;color:#30385a;font-weight:400;letter-spacing:-0.1px">Statistics</div>
<div class="t" style="left:172.5px;top:958px;font-size:11px;color:#30385a;font-weight:400;letter-spacing:-0.05px">Data Table</div>
<div class="a" style="left:0px;top:975px;width:1280px;height:1px;background:#a9afb9"></div>
<div class="a" style="left:0px;top:976px;width:1280px;height:18px;background:linear-gradient(#eef0f4 0%,#e4e7ec 22%,#cdd2d9 45%,#bfc4cd 60%,#c6cbd3 100%)"></div>
<div class="a" style="left:1279px;top:978px;width:1px;height:16px;background:#8a8f98"></div>
<div class="t" style="left:4px;top:981px;font-size:11px;color:#1a2048;font-weight:400;letter-spacing:-0.2px">Ready</div>
<div class="a" style="left:1194px;top:978px;width:1px;height:16px;background:#a9afb9;box-shadow:1px 0 0 #f5f5f5"></div>
<div class="a" style="left:1220px;top:978px;width:1px;height:16px;background:#a9afb9;box-shadow:1px 0 0 #f5f5f5"></div>
<div class="a" style="left:1248px;top:978px;width:1px;height:16px;background:#a9afb9;box-shadow:1px 0 0 #f5f5f5"></div>
<div class="t" style="left:1199px;top:982px;font-size:10px;color:#a0a4ab;font-weight:400;">CAP</div>
<div class="t" style="left:1224px;top:982px;font-size:10px;color:#1e2850;font-weight:400;">NUM</div>
<div class="t" style="left:1252px;top:982px;font-size:10px;color:#a0a4ab;font-weight:400;">SCRL</div>
</body></html>
